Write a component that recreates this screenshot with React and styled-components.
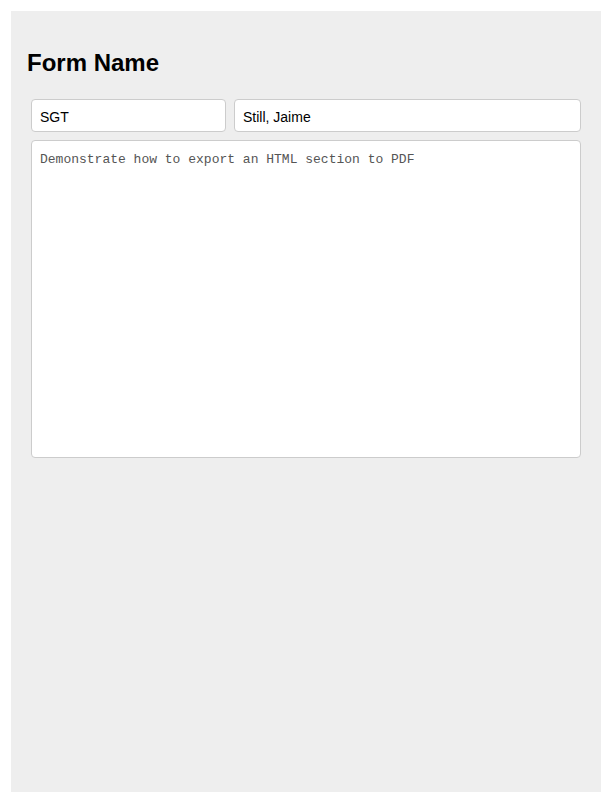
import React from "react";
import styled, { createGlobalStyle } from "styled-components";

const GlobalStyle = createGlobalStyle`
  html, body {
    margin: 0;
    padding: 0;
    background: #fff;
  }
  body {
    font-family: "Liberation Sans", Arial, sans-serif;
  }
`;

const Page = styled.div`
  padding: 11px 11px 0 11px;
`;

const Panel = styled.section`
  background: #eeeeee;
  min-height: calc(100vh - 11px);
  padding: 38px 16px 20px;
  box-sizing: border-box;
`;

const Title = styled.h1`
  margin: 0 0 22px;
  font-size: 24px;
  line-height: 28px;
  font-weight: bold;
  color: #000;
`;

const Form = styled.form`
  padding: 0 4px;
  display: flex;
  flex-direction: column;
  gap: 8px;
`;

const Row = styled.div`
  display: grid;
  grid-template-columns: 195px 1fr;
  gap: 8px;
`;

const Field = styled.input`
  box-sizing: border-box;
  width: 100%;
  height: 33px;
  margin: 0;
  padding: 8px 8px 6px;
  border: 1px solid #cccccc;
  border-radius: 4px;
  background: #fff;
  font-family: "Liberation Sans", Arial, sans-serif;
  font-size: 14px;
  line-height: 17px;
  color: #000;
  outline: none;
`;

const Notes = styled.textarea`
  box-sizing: border-box;
  display: block;
  width: 100%;
  height: 318px;
  margin: 0;
  padding: 11px 8px;
  border: 1px solid #cccccc;
  border-radius: 4px;
  background: #fff;
  font-family: "Liberation Mono", "Courier New", monospace;
  font-size: 13px;
  line-height: 16px;
  color: #555;
  resize: none;
  outline: none;
`;

export default function App() {
  return (
    <>
      <GlobalStyle />
      <Page>
        <Panel>
          <Title>Form Name</Title>
          <Form onSubmit={(e) => e.preventDefault()}>
            <Row>
              <Field type="text" defaultValue="SGT" readOnly />
              <Field type="text" defaultValue="Still, Jaime" readOnly />
            </Row>
            <Notes
              readOnly
              defaultValue="Demonstrate how to export an HTML section to PDF"
            />
          </Form>
        </Panel>
      </Page>
    </>
  );
}
